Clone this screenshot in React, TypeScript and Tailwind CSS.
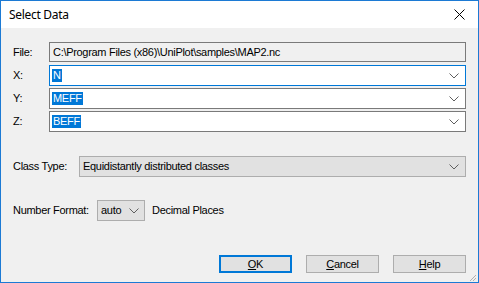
import React from "react";

const Chevron = () => (
  <svg width="10" height="6" viewBox="0 0 10 6" className="shrink-0">
    <path d="M0.5 0.5 L5 5 L9.5 0.5" fill="none" stroke="#5f5f5f" strokeWidth="1" />
  </svg>
);

function Combo({ value, focused }: { value: string; focused?: boolean }) {
  return (
    <div
      className={
        "flex-1 h-[21px] flex items-center justify-between bg-white pl-[2px] pr-[6px] border " +
        (focused ? "border-[#0078d7]" : "border-[#7a7a7a]")
      }
    >
      <span className="bg-[#0078d7] text-white leading-[13px] px-[1px]">{value}</span>
      <Chevron />
    </div>
  );
}

function Btn({ k, rest, def }: { k: string; rest: string; def?: boolean }) {
  return (
    <div
      className={
        "w-[73px] h-[18px] flex items-center justify-center bg-[#e1e1e1] " +
        (def ? "border-2 border-[#0078d7]" : "border border-[#adadad]")
      }
    >
      <span>
        <span className="underline underline-offset-[1px]">{k}</span>
        {rest}
      </span>
    </div>
  );
}

export default function App() {
  return (
    <div
      className="w-[479px] h-[283px] border border-[#1c7ad4] bg-[#f0f0f0] flex flex-col text-[11px] tracking-[-0.3px] text-black"
      style={{ fontFamily: '"Liberation Sans", Arial, sans-serif' }}
    >
      {/* title bar */}
      <div className="h-[29px] bg-white flex items-center justify-between pl-[8px] pr-[13px]">
        <span className="text-[12px] tracking-[-0.3px]" style={{ fontFamily: '"Noto Sans", "Open Sans", sans-serif' }}>
          Select Data
        </span>
        <svg width="11" height="11" viewBox="0 0 11 11">
          <path d="M0.5 0.5 L10.5 10.5 M10.5 0.5 L0.5 10.5" stroke="#000" strokeWidth="1" />
        </svg>
      </div>

      <div className="flex-1 flex flex-col pl-[12px] pr-[12px]">
        <div className="mt-[14px] flex items-center">
          <span className="w-[36px]">File:</span>
          <div className="flex-1 h-[20px] flex items-center border border-[#7a7a7a] bg-[#f0f0f0] pl-[3px]">
            C:\Program Files (x86)\UniPlot\samples\MAP2.nc
          </div>
        </div>

        <div className="mt-[3px] flex items-center">
          <span className="w-[36px]">X:</span>
          <Combo value="N" focused />
        </div>
        <div className="mt-[2px] flex items-center">
          <span className="w-[36px]">Y:</span>
          <Combo value="MEFF" />
        </div>
        <div className="mt-[2px] flex items-center">
          <span className="w-[36px]">Z:</span>
          <Combo value="BEFF" />
        </div>

        <div className="mt-[24px] flex items-center">
          <span className="w-[66px]">Class Type:</span>
          <div className="flex-1 h-[21px] flex items-center justify-between bg-[#e1e1e1] border border-[#adadad] pl-[3px] pr-[6px]">
            <span>Equidistantly distributed classes</span>
            <Chevron />
          </div>
        </div>

        <div className="mt-[23px] flex items-center">
          <span className="w-[84px]">Number Format:</span>
          <div className="w-[48px] h-[21px] flex items-center justify-between bg-[#e1e1e1] border border-[#adadad] pl-[3px] pr-[5px]">
            <span>auto</span>
            <Chevron />
          </div>
          <span className="ml-[7px]">Decimal Places</span>
        </div>

        <div className="mt-[34px] flex justify-end gap-[14px]">
          <Btn k="O" rest="K" def />
          <Btn k="C" rest="ancel" />
          <Btn k="H" rest="elp" />
        </div>

        <div className="flex-1 flex justify-end items-end -mr-[11px]">
          <svg width="9" height="9" viewBox="0 0 9 9">
            <path d="M8 2 L2 8 M8 5 L5 8" stroke="#b0b0b0" strokeWidth="1" />
          </svg>
        </div>
      </div>
    </div>
  );
}
